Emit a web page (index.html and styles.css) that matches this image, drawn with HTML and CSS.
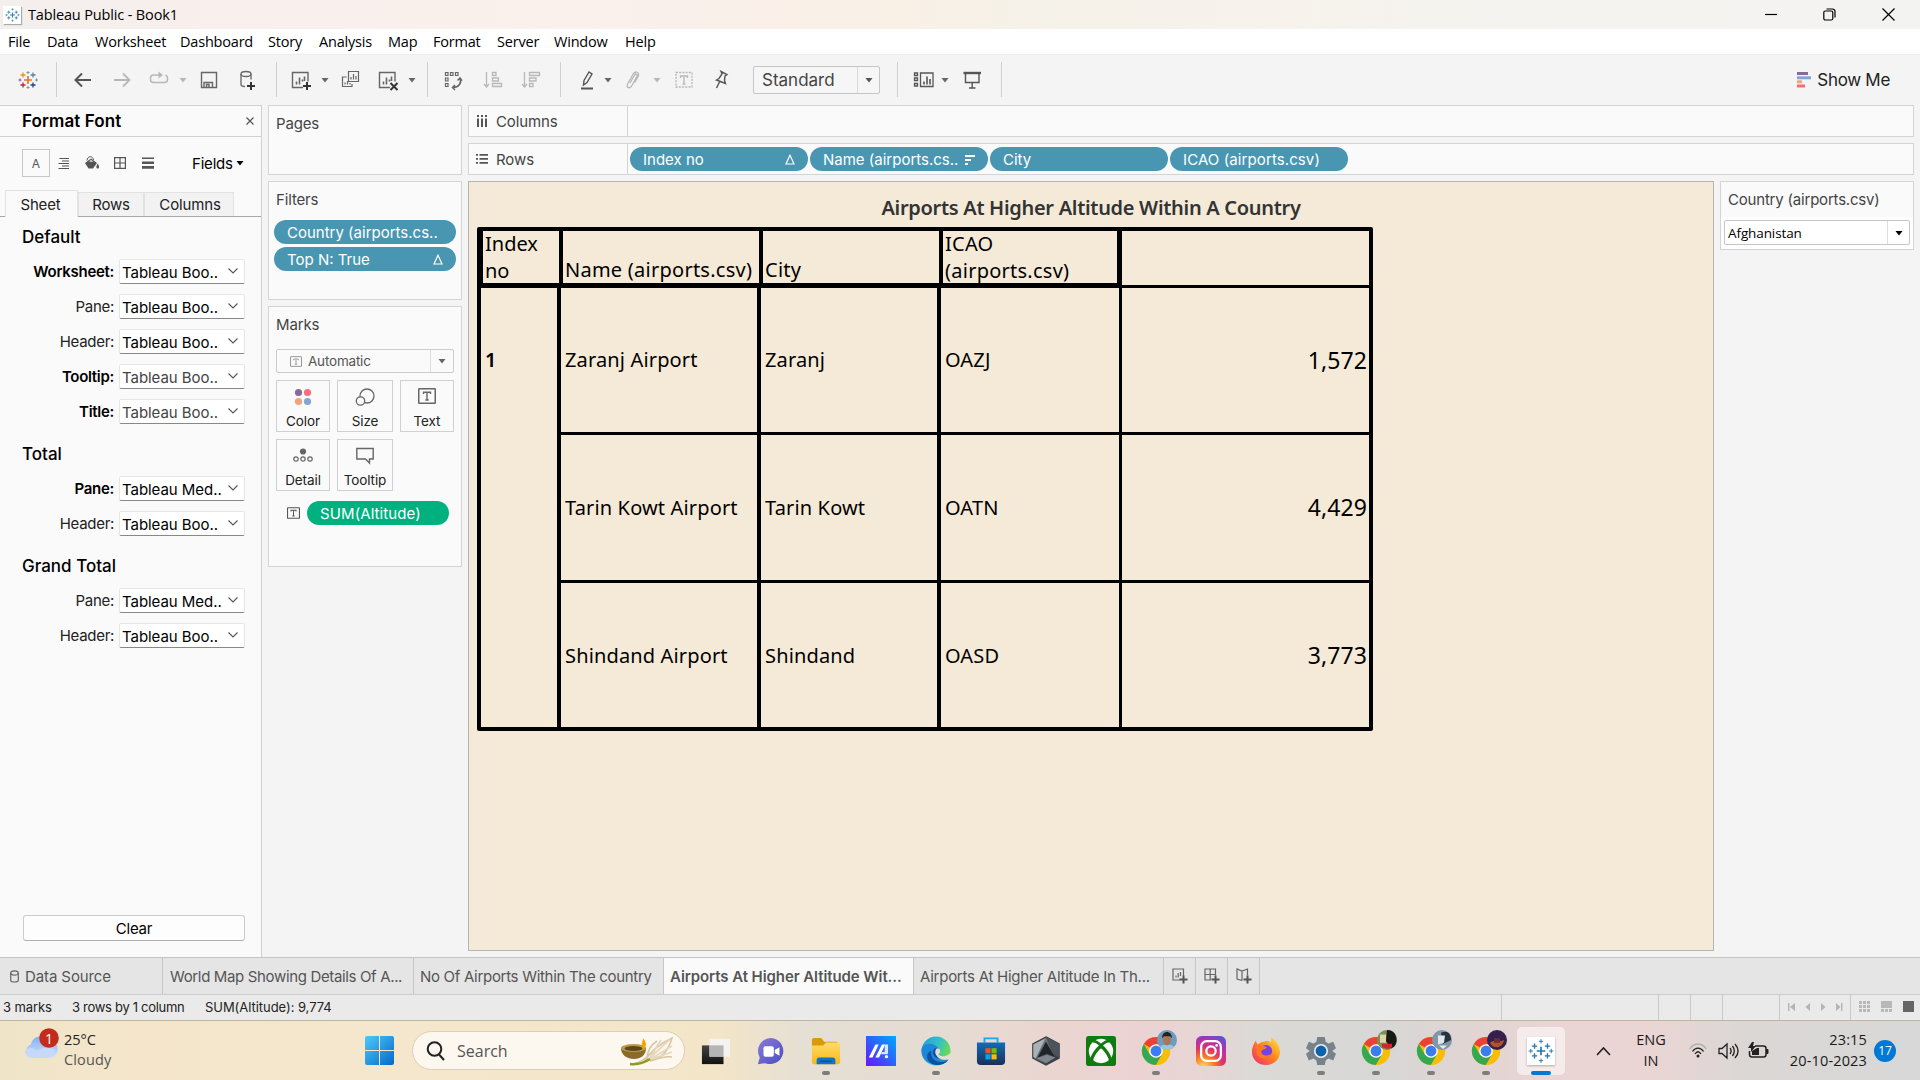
FILE: index.html
```html
<!DOCTYPE html>
<html lang="en">
<head>
<meta charset="utf-8">
<title>Tableau Public - Book1</title>
<link rel="stylesheet" href="styles.css">
</head>
<body>
<svg class="defs" aria-hidden="true">
  <defs>
    <linearGradient id="gWin" x1="0" y1="0" x2="1" y2="1"><stop offset="0" stop-color="#4cc9fb"/><stop offset="1" stop-color="#0669c9"/></linearGradient>
    <linearGradient id="gCloud" x1="0" y1="0" x2="0" y2="1"><stop offset="0" stop-color="#7fb0f2"/><stop offset="1" stop-color="#d4e3fb"/></linearGradient>
    <linearGradient id="gChat" x1="0" y1="0" x2="1" y2="1"><stop offset="0" stop-color="#8b7bd8"/><stop offset="1" stop-color="#4a4fc0"/></linearGradient>
    <linearGradient id="gFolder" x1="0" y1="0" x2="0" y2="1"><stop offset="0" stop-color="#ffdb6b"/><stop offset="1" stop-color="#f9b818"/></linearGradient>
    <linearGradient id="gMa" x1="1" y1="0" x2="0" y2="1"><stop offset="0" stop-color="#00aaff"/><stop offset=".5" stop-color="#2b62ff"/><stop offset="1" stop-color="#6d14ff"/></linearGradient>
    <linearGradient id="gEdge" x1="0" y1="0" x2="1" y2=".4"><stop offset="0" stop-color="#1c9de0"/><stop offset=".6" stop-color="#35c1c4"/><stop offset="1" stop-color="#6ddb50"/></linearGradient>
    <linearGradient id="gStore" x1="0" y1="0" x2="0" y2="1"><stop offset="0" stop-color="#0f6db8"/><stop offset="1" stop-color="#1c2f57"/></linearGradient>
    <linearGradient id="gHex" x1="0" y1="0" x2="1" y2="1"><stop offset="0" stop-color="#8e979e"/><stop offset="1" stop-color="#23282c"/></linearGradient>
    <radialGradient id="gInsta" cx=".25" cy="1.05" r="1.2"><stop offset="0" stop-color="#ffe070"/><stop offset=".3" stop-color="#fa7e1e"/><stop offset=".55" stop-color="#e1306c"/><stop offset=".8" stop-color="#a832b8"/><stop offset="1" stop-color="#4f5bd5"/></radialGradient>
    <linearGradient id="gFox" x1="1" y1="0" x2="0" y2="1"><stop offset="0" stop-color="#fff14a"/><stop offset=".45" stop-color="#ff8a1c"/><stop offset="1" stop-color="#f0227a"/></linearGradient>
    <linearGradient id="gTask" x1="0" y1="0" x2="0" y2="1"><stop offset="0" stop-color="#444"/><stop offset="1" stop-color="#111"/></linearGradient>
    <symbol id="plus9" viewBox="0 0 24 24">
      <g fill="none" stroke="currentColor">
        <path d="M12 8v8M8 12h8" stroke-width="1.6"/>
        <path d="M6 5v5M3.500 7.500h5M18 5v5M15.500 7.500h5M6 14v5M3.500 16.500h5M18 14v5M15.500 16.500h5" stroke-width="1.3"/>
        <path d="M12 1v4M10 3h4M12 19v4M10 21h4M2.500 10v4M.5 12h4M21.500 10v4M19.500 12h4" stroke-width=".9"/>
      </g>
    </symbol>
    <symbol id="chrome" viewBox="0 0 32 32">
      <circle cx="16" cy="16" r="15" fill="#fbbc04"/>
      <path d="M16 16 3 8.500A15 15 0 0 1 29 8.500H16z" fill="#ea4335"/>
      <path d="M3 8.500A15 15 0 0 0 16 31l6.500-11.200L16 16 9.500 19.700z" fill="#34a853"/>
      <path d="M16 8.500h13A15 15 0 0 1 16 31l6.500-11.200z" fill="#fbbc04"/>
      <circle cx="16" cy="16" r="7.300" fill="#fff"/><circle cx="16" cy="16" r="5.800" fill="#3b7ded"/>
    </symbol>
    <symbol id="tbox" viewBox="0 0 18 16">
      <rect x=".75" y=".75" width="16.500" height="14.500" rx=".5" fill="none" stroke="currentColor" stroke-width="1.500"/>
      <path d="M5.500 6V4.300h7V6M9 4.500v7.500M7.300 12h3.400" fill="none" stroke="currentColor" stroke-width="1.400"/>
    </symbol>
    <symbol id="chev" viewBox="0 0 10 6"><path d="M.5.5 5 5 9.500.5" fill="none" stroke="#555" stroke-width="1.100"/></symbol>
    <symbol id="tri" viewBox="0 0 8 6"><path d="M.5 1h7L4 5.500z" fill="currentColor"/></symbol>
    <symbol id="delta" viewBox="0 0 10 11"><path d="M5 1.200 9 10H1z" fill="none" stroke="#fff" stroke-width="1.200"/></symbol>
  </defs>
</svg>

<header class="titlebar">
  <span class="app-icon"><svg width="15" height="16"><use href="#plus9"/></svg></span>
  <span class="app-title">Tableau Public - Book1</span>
  <div class="winbtns">
    <svg width="12" height="12"><path d="M0 5.500h12" stroke="#000" stroke-width="1.200"/></svg>
    <svg width="13" height="13" fill="none" stroke="#000" stroke-width="1.200"><rect x=".8" y="3" width="9" height="9" rx="1.500"/><path d="M3.500 1h6A2.500 2.500 0 0 1 12 3.500v6"/></svg>
    <svg width="13" height="13" stroke="#000" stroke-width="1.200"><path d="M.5.5l12 12M12.500.5l-12 12"/></svg>
  </div>
</header>

<nav class="menubar">
  <span class="w39">File</span><span class="w48">Data</span><span class="w85">Worksheet</span><span class="w88">Dashboard</span><span class="w51">Story</span><span class="w69">Analysis</span><span class="w45">Map</span><span class="w64">Format</span><span class="w56">Server</span><span class="w71">Window</span><span>Help</span>
</nav>

<div class="toolbar">
  <svg class="ic m16" viewBox="0 0 24 24" fill="none">
    <path d="M12 8v8M8 12h8" stroke="#e8762b" stroke-width="1.700"/>
    <path d="M7 4.500v5M4.500 7h5" stroke="#eb912c" stroke-width="1.300"/><path d="M17 4.500v5M14.500 7h5" stroke="#59879b" stroke-width="1.300"/>
    <path d="M7 14.500v5M4.500 17h5" stroke="#c72035" stroke-width="1.300"/><path d="M17 14.500v5M14.500 17h5" stroke="#1f457e" stroke-width="1.300"/>
    <path d="M12 3v3M10.500 4.500h3M12 18v3M10.500 19.500h3M20.500 10.500v3M19 12h3" stroke="#7199a6"/><path d="M4 10.500v3M2.500 12h3" stroke="#5c6692"/>
  </svg>
  <i class="sep m16"></i>
  <svg class="ic m14" viewBox="0 0 24 24" fill="none" stroke="#555" stroke-width="2"><path d="M4.500 12H20M11 5.500 4.500 12l6.500 6.500"/></svg>
  <svg class="ic m15 dim" viewBox="0 0 24 24" fill="none" stroke="currentColor" stroke-width="1.800"><path d="M4 12h15.500M13 5.500l6.500 6.500-6.500 6.500"/></svg>
  <svg class="ic m13 dim" viewBox="0 0 24 24" fill="none" stroke="currentColor" stroke-width="1.500"><path d="M15 7H6.500a3 3 0 0 0-3 3v1.500a3 3 0 0 0 3 3h11a3 3 0 0 0 3-3V10c0-1.500-1-2.500-2-3"/><path d="M11.500 3.500 16 7l-4.500 3.500z" fill="currentColor" stroke="none"/></svg>
  <svg class="car m8 dim"><use href="#tri"/></svg>
  <svg class="ic m10" viewBox="0 0 24 24" fill="none" stroke="#666" stroke-width="1.400"><path d="M4.500 4.500h15v15h-15z"/><path d="M7 19.500v-5h8.500v5M9.500 19.500v-3h2.500v3"/></svg>
  <svg class="ic m14" viewBox="0 0 24 24" fill="none" stroke="#666" stroke-width="1.300"><ellipse cx="11" cy="6" rx="5" ry="2.500"/><path d="M6 6v10.500c0 1.200 2 2 4 2M16 6v5.500"/><path d="M16 14v8M12 18h8" stroke="#333" stroke-width="2"/></svg>
  <i class="sep m17"></i>
  <svg class="ic m12" viewBox="0 0 24 24" fill="none" stroke="#666" stroke-width="1.400"><path d="M14 19.500H3.500V4.500h15.500v9"/><path d="M7.500 16.500v-3M10.500 16.500V9.500M13.500 13.500v-2M15.500 13V8.500" stroke-width="1.600"/><path d="M18 14v8M14 18h8" stroke="#333" stroke-width="2"/></svg>
  <svg class="car m8"><use href="#tri"/></svg>
  <svg class="ic m10" viewBox="0 0 24 24" fill="none" stroke="#666" stroke-width="1.200"><path d="M9.500 3.500h10v10h-10zM7.500 9H3.500v9.500h9.500V16"/><path d="M12 11.500v-2.500M14.500 11.500V6M17 11.500V8M6 16.500v-2M8.500 16.500v-3.500M11 16.500v-1.500"/></svg>
  <svg class="ic m13" viewBox="0 0 24 24" fill="none" stroke="#666" stroke-width="1.400"><path d="M14 19.500H3.500V4.500h15.500v9"/><path d="M7.500 16.500v-3M10.500 16.500V9.500M13.500 13.500v-2M15.500 13V8.500" stroke-width="1.600"/><path d="m14.500 15 7 7M21.500 15l-7 7" stroke="#333" stroke-width="2"/></svg>
  <svg class="car m8"><use href="#tri"/></svg>
  <i class="sep m11"></i>
  <svg class="ic m13" viewBox="0 0 24 24" fill="none" stroke="#666" stroke-width="1.200"><path d="M4.500 4.500H7v3H4.500zM9.500 4.500H12v3H9.500zM14.500 4.500H17v3h-2.500zM4.500 10H7v3H4.500zM4.500 15.500H7v3H4.500z"/><path d="M19 10.500c2 4-1 9-7 9M16.500 12.500l2.500-2.500 2 2.800M14 17l-2.500 2.500L14 22" stroke-width="1.500"/></svg>
  <svg class="ic m16 dim" viewBox="0 0 24 24" fill="none" stroke="currentColor" stroke-width="1.300"><path d="M5.500 4v14.500M3 16l2.500 3L8 16M11.500 4.500h3.500v3h-3.500zM11.500 10h6v3h-6zM11.500 15.500h9v3h-9z"/></svg>
  <svg class="ic m14 dim" viewBox="0 0 24 24" fill="none" stroke="currentColor" stroke-width="1.300"><path d="M5.500 4v14.500M3 16l2.500 3L8 16M10.500 4.500h10v3h-10zM10.500 10h6.500v3h-6.500zM10.500 15.500H14v3h-3.500z"/></svg>
  <i class="sep m17"></i>
  <svg class="ic m14" viewBox="0 0 24 24" fill="none" stroke="#555" stroke-width="1.400"><path d="m9 12.500 5-8.500 3 2-5 8.500-3.500 2.500z"/><path d="M6 20.500h12" stroke-width="2"/></svg>
  <svg class="car m5"><use href="#tri"/></svg>
  <svg class="ic m8 dim" viewBox="0 0 24 24" fill="none" stroke="currentColor" stroke-width="1.300"><path d="m10 15 4.500-8c1.500-2 3.500-.5 2.500 1.200l-5.500 10c-2 3-5.500 1-4-2l5.500-10c2-4 7-2 5 2.500l-3.500 6"/></svg>
  <svg class="car m9 dim"><use href="#tri"/></svg>
  <svg class="ic m11 dim" viewBox="0 0 24 24" fill="none" stroke="currentColor" stroke-width="1.300"><path d="M4 4.500h16v14.500H4z" stroke-dasharray="2 1.200"/><path d="M8.500 10V8h7v2M12 8v8M10.500 16h3"/></svg>
  <svg class="ic m12" viewBox="0 0 24 24" fill="none" stroke="#555" stroke-width="1.400"><path d="m13 3.500 6 3-2 1.500-.5 4.500 1 3-9-3.500 2.500-1.500L14 6zM11.500 14l-3 6"/></svg>
  <div class="view-select m21"><span>Standard</span><b><svg width="8" height="6"><use href="#tri"/></svg></b></div>
  <i class="sep m17"></i>
  <svg class="ic m14" viewBox="0 0 24 24" fill="none" stroke="#555" stroke-width="1.300"><path d="M2.500 5h3v2.500h-3zM2.500 10h3v2.500h-3zM2.500 15.500h3V18h-3zM8.500 5H21v13.500H8.500z"/><path d="M12 16.500v-3M15 16.500V8.500M18 16.500v-5.500" stroke-width="1.600"/></svg>
  <svg class="car m5"><use href="#tri"/></svg>
  <svg class="ic m11" viewBox="0 0 24 24" fill="none" stroke="#555" stroke-width="1.400"><path d="M5.500 5.500v9h13.500v-9M12.200 14.500v5M9 20h6.500"/><path d="M3.500 5h17.500" stroke-width="2.400"/></svg>
  <i class="sep m17"></i>
  <div class="showme">
    <svg width="14" height="16"><path d="M0 0h11v3H0z" fill="#866b9a"/><path d="M0 4.300h14v3H0z" fill="#83a5cf"/><path d="M0 8.300h5v3H0z" fill="#f2a37a"/><path d="M0 12.500h8v3H0z" fill="#f56b7e"/></svg>
    <span>Show Me</span>
  </div>
</div>

<main class="work">
  <aside class="format">
    <div class="fhead"><h2>Format Font</h2><svg width="8" height="8" stroke="#555" stroke-width="1.200"><path d="M.5.5l7 7M7.500.5l-7 7"/></svg></div>
    <div class="ftools">
      <span class="abox">A</span>
      <svg width="12" height="12" viewBox="0 0 12 12" stroke="#555" stroke-width="1.100"><path d="M1.500 1.500h9.500M4 4h7M.5 6.500H11M4 9h7M.5 11.500H11"/></svg>
      <svg width="16" height="14" viewBox="0 0 16 14"><path d="M3 4.500C3.500-.5 9-.5 9.500 4" fill="none" stroke="#555"/><path d="M1 7 7 2.500 13 7l-4 5.500H4.500z" fill="#555"/><path d="M5 5.500 7 4l2.500 1.800z" fill="#fafafa"/><path d="M13.700 7.500c1.500 2.500 2 5 0 5s-1.500-2.500 0-5z" fill="#555"/></svg>
      <svg width="12" height="12" viewBox="0 0 12 12" fill="none" stroke="#555" stroke-width="1.200"><path d="M.6.6h10.800v10.800H.6zM6 .6v10.800M.6 6h10.800"/></svg>
      <svg class="last" width="12" height="12" viewBox="0 0 12 12" fill="#555"><path d="M0 .5h12v1.500H0zM0 4.500h12V7H0zM0 9h12v2.800H0z"/></svg>
      <span class="fields">Fields</span><svg width="8" height="6"><use href="#tri"/></svg>
    </div>
    <div class="ftabs"><span class="on">Sheet</span><span class="r">Rows</span><span class="c">Columns</span></div>
    <h3>Default</h3>
    <div class="frow"><label class="b">Worksheet:</label><div class="sel">Tableau Boo..<svg><use href="#chev"/></svg></div></div>
    <div class="frow"><label>Pane:</label><div class="sel">Tableau Boo..<svg><use href="#chev"/></svg></div></div>
    <div class="frow"><label>Header:</label><div class="sel">Tableau Boo..<svg><use href="#chev"/></svg></div></div>
    <div class="frow"><label class="b">Tooltip:</label><div class="sel g">Tableau Boo..<svg><use href="#chev"/></svg></div></div>
    <div class="frow"><label class="b">Title:</label><div class="sel g">Tableau Boo..<svg><use href="#chev"/></svg></div></div>
    <h3 class="next">Total</h3>
    <div class="frow"><label class="b">Pane:</label><div class="sel">Tableau Med..<svg><use href="#chev"/></svg></div></div>
    <div class="frow"><label>Header:</label><div class="sel">Tableau Boo..<svg><use href="#chev"/></svg></div></div>
    <h3 class="next">Grand Total</h3>
    <div class="frow"><label>Pane:</label><div class="sel">Tableau Med..<svg><use href="#chev"/></svg></div></div>
    <div class="frow"><label>Header:</label><div class="sel">Tableau Boo..<svg><use href="#chev"/></svg></div></div>
    <div class="clear">Clear</div>
  </aside>

  <section class="cards">
    <div class="card pages"><h4>Pages</h4></div>
    <div class="card filters"><h4>Filters</h4>
      <div class="pill">Country (airports.cs..</div>
      <div class="pill">Top N: True<svg width="10" height="11"><use href="#delta"/></svg></div>
    </div>
    <div class="card marks"><h4>Marks</h4>
      <div class="auto"><svg width="12" height="11"><use href="#tbox"/></svg><span>Automatic</span><b><svg width="8" height="6"><use href="#tri"/></svg></b></div>
      <div class="mgrid">
        <div><svg width="18" height="18"><circle cx="4.500" cy="4.500" r="3.600" fill="#866b9a"/><circle cx="13.500" cy="4.500" r="3.600" fill="#fa6e80"/><circle cx="4.500" cy="13.500" r="3.600" fill="#f2a37a"/><circle cx="13.500" cy="13.500" r="3.600" fill="#83a5cf"/></svg>Color</div>
        <div><svg width="20" height="18" fill="#fafafa" stroke="#666" stroke-width="1.300"><circle cx="12" cy="8" r="7"/><circle cx="5.500" cy="13" r="4.200"/></svg>Size</div>
        <div><svg class="t" width="18" height="16"><use href="#tbox"/></svg>Text</div>
        <div><svg width="20" height="18" fill="none" stroke="#666" stroke-width="1.200"><circle cx="10" cy="4.500" r="2.500" fill="#666"/><circle cx="3" cy="12" r="2.200"/><circle cx="10" cy="12" r="2.200"/><circle cx="17" cy="12" r="2.200"/></svg>Detail</div>
        <div><svg width="18" height="18" fill="none" stroke="#666" stroke-width="1.400"><path d="M.8 1.500h16.400v10.500h-3.700V16l-4-4H.8z"/></svg>Tooltip</div>
      </div>
      <div class="sum"><svg width="13" height="12"><use href="#tbox"/></svg><div class="pill green">SUM(Altitude)</div></div>
    </div>
  </section>

  <section class="sheet">
    <div class="shelf"><div class="slabel"><svg width="12" height="12" viewBox="0 0 12 12" fill="#555"><path d="M1 0h2v2H1zM5 0h2v2H5zM9 0h2v2H9zM1 3.500h2V12H1zM5 3.500h2V12H5zM9 3.500h2V12H9z"/></svg>Columns</div></div>
    <div class="shelf"><div class="slabel"><svg width="12" height="12" viewBox="0 0 12 12" fill="#555"><path d="M0 1h2v1.800H0zM0 5h2v1.800H0zM0 9h2v1.800H0zM3.500 1H12v1.800H3.500zM3.500 5H12v1.800H3.500zM3.500 9H12v1.800H3.500z"/></svg>Rows</div>
      <div class="pills"><div class="pill">Index no<svg width="10" height="11"><use href="#delta"/></svg></div><div class="pill sorted">Name (airports.cs..<svg width="10" height="10"><path d="M0 1h10M0 5h6M0 9h3" stroke="#fff" stroke-width="2"/></svg></div><div class="pill">City</div><div class="pill icao">ICAO (airports.csv)</div></div>
    </div>
    <div class="below">
      <div class="canvas">
        <h1>Airports At Higher Altitude Within A Country</h1>
        <div class="table">
          <div class="thead">
            <div class="two">Index<br>no</div><div>Name (airports.csv)</div><div>City</div><div class="two">ICAO<br>(airports.csv)</div><div class="blank"></div>
          </div>
          <div class="tbody">
            <div class="idx">1</div>
            <div class="rows">
              <div class="tr"><span>Zaranj Airport</span><span>Zaranj</span><span>OAZJ</span><span class="num">1,572</span></div>
              <div class="tr"><span>Tarin Kowt Airport</span><span>Tarin Kowt</span><span>OATN</span><span class="num">4,429</span></div>
              <div class="tr"><span>Shindand Airport</span><span>Shindand</span><span>OASD</span><span class="num">3,773</span></div>
            </div>
          </div>
        </div>
      </div>
      <div class="country"><h4>Country (airports.csv)</h4><div class="cwrap"><div class="csel"><span>Afghanistan</span><b><svg width="8" height="6"><use href="#tri"/></svg></b></div></div></div>
    </div>
  </section>
</main>

<div class="tabs">
  <div class="tab ds"><svg width="9" height="13" fill="none" stroke="#666" stroke-width="1.200"><ellipse cx="4.500" cy="3" rx="3.800" ry="2.200"/><path d="M.7 3v7.500c0 2 7.600 2 7.600 0V3"/></svg>Data Source</div>
  <div class="tab t1"><span>World Map Showing Details Of A...</span></div>
  <div class="tab t2"><span>No Of Airports Within The country</span></div>
  <div class="tab t3 on"><span>Airports At Higher Altitude Wit...</span></div>
  <div class="tab t4"><span>Airports At Higher Altitude In Th...</span></div>
  <div class="tab add"><svg width="16" height="16" fill="none" stroke="#666" stroke-width="1.200"><path d="M8 12H1V1h10.500v7M4 9.500v-2M6.200 9.500V5M8.500 8V4"/><path d="M11.500 7.500v8M7.500 11.500h8" stroke="#555" stroke-width="2"/></svg></div>
  <div class="tab add"><svg width="16" height="16" fill="none" stroke="#666" stroke-width="1.200"><path d="M7 12H1V1h10.500v6.500M6.200 1v11M1 6.500h10.500"/><path d="M11.500 7.500v8M7.500 11.500h8" stroke="#555" stroke-width="2"/></svg></div>
  <div class="tab add"><svg width="16" height="16" fill="none" stroke="#666" stroke-width="1.200"><path d="M6 12.500 1 11V1l5 2 5.500-2v6.500M6 3v9.500"/><path d="M11.500 7.500v8M7.500 11.500h8" stroke="#555" stroke-width="2"/></svg></div>
</div>

<div class="status">
  <span class="s1">3 marks</span><span class="s2">3 rows by 1 column</span><span class="s3">SUM(Altitude): 9,774</span>
  <div class="cells"><i class="c157"></i><i class="c32"></i><i class="c32"></i><i class="c57"></i>
    <i class="c71"><svg width="62" height="8" viewBox="0 0 62 8" fill="#b4b4b4"><path d="M0 0h1.400v8H0zM7 0v8L2 4zM22 0v8l-4.500-4zM33 0v8l4.500-4zM48 0v8l4.500-4zM53 0h1.400v8H53z"/></svg></i>
    <i class="c69"><svg width="56" height="11" viewBox="0 0 56 11"><path d="M0 0h3v3H0zM4 0h3v3H4zM8 0h3v3H8zM0 4h3v3H0zM4 4h3v3H4zM8 4h3v3H8zM0 8h3v3H0zM4 8h3v3H4zM8 8h3v3H8zM22 0h11v7H22zM22 8h3v3h-3zM26 8h3v3h-3zM30 8h3v3h-3z" fill="#b8b8b8"/><path d="M44 0h11v11H44z" fill="#666"/></svg></i>
  </div>
</div>

<footer class="taskbar">
  <div class="weather">
    <svg width="38" height="34" viewBox="0 0 38 34"><path d="M8 30a7 7 0 0 1-1-13.500 10 10 0 0 1 18-4A8.500 8.500 0 0 1 25 30z" fill="url(#gCloud)"/><path d="M1 23c4-5 9-3 12 0 4-4 12-4 18-1 0 5-3 8-7 8H8c-4 0-7-3-7-7z" fill="#c6d9f8"/><circle cx="25" cy="10" r="9.800" fill="#c42b1c"/></svg><em>1</em>
    <p>25°C<br><span>Cloudy</span></p>
  </div>
  <div class="start"><svg width="29" height="29"><path d="M0 2q0-2 2-2h12v14H0zM15 0h12q2 0 2 2v12H15zM0 15h14v14H2q-2 0-2-2zM15 15h14v12q0 2-2 2H15z" fill="url(#gWin)"/></svg></div>
  <div class="search">
    <svg width="19" height="20" fill="none" stroke="#222" stroke-width="2"><circle cx="8.500" cy="8" r="6.800"/><path d="m13 13.500 5 5.500"/></svg><span>Search</span>
    <svg class="bowl" width="54" height="30" viewBox="0 0 54 30"><path d="M14 27c10-1 14-10 20-12M23 26C30 14 40 7 51 2c-3 10-8 20-22 23M26 24C26 14 31 8 36 5M30 25c8-3 15-5 21-4" fill="none" stroke="#d9c6a4" stroke-width="1.600"/><path d="M28 23 49 3M28 24 51 10M28 24 51 16M28 23 40 4" stroke="#e6d8bc" stroke-width="1.800"/><path d="M9 28c8 1 14-1 20-5" fill="none" stroke="#8f9a20" stroke-width="2.500"/><path d="M0 12h25c0 7-5 11-12 11S0 19 0 12z" fill="#8a6b28"/><ellipse cx="12.500" cy="12" rx="12.500" ry="4" fill="#bb9a4f"/><ellipse cx="12.500" cy="12.500" rx="9" ry="2.500" fill="#5e4818"/><path d="M22 13c-3-4 0-7 0-11 3 4 5 8 0 11z" fill="#f5a300"/></svg>
  </div>
  <div class="apps">
    <div><svg viewBox="0 0 32 32"><path d="M1 10h23v20H1z" fill="url(#gTask)"/><path d="M9 3h22v19H9z" fill="#f3f3f3" opacity=".95"/><path d="M9 10h15v12H9z" fill="#b5b5b5"/></svg></div>
    <div><svg viewBox="0 0 32 32"><path d="M16 2a14 14 0 1 1-6 27l-8 1 2-7A14 14 0 0 1 16 2z" fill="url(#gChat)"/><rect x="8" y="11" width="11" height="11" rx="2" fill="#fff"/><path d="m20 15 5-3v9l-5-3z" fill="#fff"/></svg></div>
    <div class="run"><svg viewBox="0 0 32 32"><path d="M1 4q0-2 2-2h8l3 4h14v6H1z" fill="#d99a0a"/><path d="M1 10h12l3-3h13q2 0 2 2v19q0 2-2 2H3q-2 0-2-2z" fill="url(#gFolder)"/><path d="M6 30v-4q0-3 3-3h14q3 0 3 3v4z" fill="#1173c6"/><path d="M10 27h12" stroke="#0b4e90" stroke-width="1.500"/></svg></div>
    <div><svg viewBox="0 0 32 32"><path d="M0 0h32v32H0z" fill="url(#gMa)"/><path d="m3 23 7-14h3.500L7 23zM10 23l7-14h3.500L14 23z" fill="#fff"/><path d="M20 9h3.500v10H20zM17 17h6v2.500h-7z" fill="#dfe4ff"/><circle cx="21.800" cy="22" r="1.800" fill="#fff"/></svg></div>
    <div class="run"><svg viewBox="0 0 32 32"><circle cx="16" cy="16" r="15.500" fill="url(#gEdge)"/><path d="M.5 15c1-8 13-9 18-2 2 3 0 4-2 5-1 7 6 9 13 7C25 33 2 34 .5 16z" fill="#1f87d8"/><path d="M11 16c-2 9 7 15 17.500 10-6 8-21 6-22-4 0-4 3-6 4.500-6z" fill="#0c51a2"/><path d="M18 12.500c-4 0-6 3-5 7 1 3 4 4.500 7 4.500-3-1.500-4-4-3-6z" fill="#0c51a2"/><path d="M17 13c3.500 0 5 4 1.500 6.500 2 3 8 3 13-1.500l-1 6c-3 2-8 1.500-11-.5-4-2.500-6-7-2.500-10.500z" fill="#e5dcd4"/><path d="M20 19.500c4 2.500 9 1 11-2l.5-3.500c0 6-7 9-11.500 5.500z" fill="#62d85a"/></svg></div>
    <div><svg viewBox="0 0 32 32"><path d="M9 7V2.500h14V7" fill="none" stroke="#1aa6ee" stroke-width="2"/><path d="M1 7h30v20q0 4-4 4H5q-4 0-4-4z" fill="url(#gStore)"/><path d="M10 13h5.500v5.500H10z" fill="#f25022"/><path d="M16.500 13H22v5.500h-5.500z" fill="#7fba00"/><path d="M10 19.500h5.500V25H10z" fill="#00a4ef"/><path d="M16.500 19.500H22V25h-5.500z" fill="#ffb900"/></svg></div>
    <div><svg viewBox="0 0 32 32"><path d="m16 1 14 7.500v15L16 31 2 23.500v-15z" fill="url(#gHex)"/><path d="m16 1 14 7.500v15L16 31 2 23.500v-15z" fill="none" stroke="#3b4247" stroke-width="1.500"/><path d="m16 1 14 7.500v15L23 18z" fill="#4b545b"/><path d="M15 3 5 24 2.500 22V9z" fill="#aab2b7"/><path d="m16 6 9 16-8-3-10 4z" fill="#202427"/><path d="m6 24 11-4 9 3-10 6z" fill="#7d868c"/></svg></div>
    <div><svg viewBox="0 0 32 32"><rect width="32" height="32" rx="3" fill="#107c10"/><circle cx="16" cy="16" r="13" fill="#fff"/><path d="M7 5.500C11 5 14 8 16 10c2-2 5-5 9-4.500" fill="none" stroke="#107c10" stroke-width="3"/><path d="M5.500 27C7 20 12 14 16 10.500 20 14 25 20 26.500 27" fill="none" stroke="#107c10" stroke-width="3.500"/><path d="M12 6.500 16 9l4-2.500L16 14z" fill="#107c10"/></svg></div>
    <div class="run"><svg viewBox="0 0 32 32"><use href="#chrome"/></svg><u><svg viewBox="0 0 20 22" preserveAspectRatio="none"><ellipse cx="10" cy="11" rx="10" ry="11" fill="#6d9cc0"/><path d="M3 19c1-4 13-4 14 0-4 4-10 4-14 0z" fill="#9fc4d8"/><ellipse cx="10" cy="11" rx="4" ry="6" fill="#a87758"/><path d="M5 9c0-9 10-9 10 0L13 7H7z" fill="#222"/></svg></u></div>
    <div><svg viewBox="0 0 32 32"><rect width="32" height="32" rx="6" fill="url(#gInsta)"/><rect x="5.500" y="5.500" width="21" height="21" rx="6" fill="none" stroke="#fff" stroke-width="2.400"/><circle cx="16" cy="16" r="5" fill="none" stroke="#fff" stroke-width="2.400"/><circle cx="22" cy="10" r="1.400" fill="#fff"/></svg></div>
    <div><svg viewBox="0 0 32 32"><path d="M17 5c2 0 3 1 4 2 1-2 1-4 0-6 6 4 10 9 10 16 0 8-7 14-15 14S1 25 1 17C1 12 3 8 5 5l2 4c2-2 6-3 10-4z" fill="url(#gFox)"/><circle cx="16" cy="16" r="6.500" fill="#7542e5"/><path d="M6 12c4-3 8-1 11 0-2 3-6 2-6 5s5 6 10 2c-2 7-14 6-15-1z" fill="#ff7a1f"/></svg></div>
    <div class="run"><svg viewBox="0 0 32 32"><path d="M12 1h8l1 5 3 2 5-2 3 7-4 3 4 3-3 7-5-2-3 2-1 5h-8l-1-5-3-2-5 2-3-7 4-3-4-3 3-7 5 2 3-2z" fill="#78828b"/><circle cx="16" cy="16" r="7.500" fill="#eef1f3"/><circle cx="16" cy="16" r="5.800" fill="#0d62ae"/></svg></div>
    <div class="run"><svg viewBox="0 0 32 32"><use href="#chrome"/></svg><u><svg viewBox="0 0 20 22" preserveAspectRatio="none"><ellipse cx="10" cy="11" rx="10" ry="11" fill="#7e8e55"/><path d="M10 0c12 0 12 18 4 20L9 12z" fill="#181a14"/><path d="M3 5h6v9H3z" fill="#d9d8a8"/><path d="M5 15h10v4l-4 2-6-2z" fill="#d8232f"/></svg></u></div>
    <div class="run"><svg viewBox="0 0 32 32"><use href="#chrome"/></svg><u><svg viewBox="0 0 20 22" preserveAspectRatio="none"><ellipse cx="10" cy="11" rx="10" ry="11" fill="#7f97a8"/><path d="M9 3c8-4 10 3 10 8l-8 4z" fill="#26323c"/><path d="M6 6h7l-1 8-6 2z" fill="#dfe8ec"/><path d="M7 17h8l-4 4z" fill="#e8eef0"/></svg></u></div>
    <div class="run"><svg viewBox="0 0 32 32"><use href="#chrome"/></svg><u><svg viewBox="0 0 20 22" preserveAspectRatio="none"><ellipse cx="10" cy="11" rx="10" ry="11" fill="#33204f"/><path d="M3 14c4-4 9 0 14-3-1 9-11 11-14 3z" fill="#b4512a"/><path d="M7 9h6v5H7z" fill="#6b2d39"/></svg></u></div>
    <div class="active"><span><svg width="28" height="28" viewBox="-1 -1 26 26"><use href="#plus9" width="24" height="24"/></svg></span></div>
  </div>
  <div class="tray">
    <svg class="up" width="15" height="10" fill="none" stroke="#222" stroke-width="1.600"><path d="m1 9 6.500-7L14 9"/></svg>
    <p class="lang">ENG<br>IN</p>
    <svg class="wifi" width="18" height="15" viewBox="0 0 18 15" fill="none" stroke="#222" stroke-width="1.300"><path d="M.7 6c4-6.500 12.600-6.500 16.600 0" stroke="#aaa"/><path d="M3.500 8.500c3-4.500 8-4.500 11 0M6 11c2-3 4-3 6 0"/><circle cx="9" cy="13" r="1.500" fill="#222" stroke="none"/></svg>
    <svg class="snd" width="21" height="18" viewBox="0 0 21 18" fill="none" stroke="#222" stroke-width="1.300"><path d="M1 6.500h3L9 2v14l-5-4.500H1zM12 6c1.500 2 1.500 4 0 6M14.500 4c2.500 3.500 2.500 6.500 0 10M17 2c4 4.500 4 9.500 0 14"/></svg>
    <svg class="bat" width="21" height="18" viewBox="0 0 21 18"><path d="M7 4h8.500q2.500 0 2.500 2.500v6q0 2.500-2.500 2.500H4q-2.500 0-2.500-2.500V9" fill="none" stroke="#222" stroke-width="1.500"/><path d="M18.500 7.500h1.500v4h-1.500z" fill="#222" stroke="#222"/><path d="M4 13V9l5-3h2v7zM4 0 0 6h3v4l5-6H5l1-4z" fill="#222"/></svg>
    <p class="clock">23:15<br>20-10-2023</p>
    <span class="n17">17</span>
  </div>
</footer>
</body>
</html>
```
FILE: styles.css
```css
* { box-sizing: border-box; }
body { margin: 0; width: 1920px; height: 1080px; overflow: hidden; background: #f4f4f4; font-family: "Inter", "Roboto", sans-serif; color: #000; display: flex; flex-direction: column; }
h1, h2, h3, h4, p { margin: 0; font-weight: 400; }
svg { display: block; flex: none; }
.defs { position: absolute; width: 0; height: 0; }
span, label, h1, h2, h3, h4, .pill, .sel { white-space: nowrap; }

/* Title bar and menu */
.titlebar { height: 29px; flex: none; display: flex; align-items: center; padding-left: 3px; background: linear-gradient(90deg, #f3efed 0, #f9efec 220px, #faf0ec 620px, #f9f0e6 900px, #f5f2e9 1050px, #f7f2ec 1250px, #f5f3ee 1450px, #f3f3f2 1920px); font-family: "Open Sans", sans-serif; font-size: 14px; }
.app-icon { width: 18px; height: 18px; display: flex; align-items: center; justify-content: center; background: #fff; box-shadow: 1px 1px 1px #aaa; color: #2f7ba8; }
.app-title { margin-left: 7px; font-size: 14.500px; letter-spacing: -.15px; }
.winbtns { margin-left: auto; display: flex; align-items: center; gap: 46px; padding-right: 25px; }
.menubar { height: 25px; flex: none; background: #fff; display: flex; align-items: center; padding-left: 8px; font-family: "Open Sans", sans-serif; font-size: 14.500px; letter-spacing: -.2px; padding-bottom: 0; }
.w39 { width: 39px; } .w48 { width: 48px; } .w85 { width: 85px; } .w88 { width: 88px; } .w51 { width: 51px; } .w69 { width: 69px; } .w45 { width: 45px; } .w64 { width: 64px; } .w56 { width: 57px; } .w71 { width: 71px; }

/* Toolbar */
.toolbar { height: 51px; flex: none; display: flex; align-items: center; background: #f4f4f4; border-top: 1px solid #ededed; padding-bottom: 1px; }
.ic { width: 24px; height: 24px; }
.car { width: 8px; height: 6px; color: #666; }
.dim { color: #b8b8b8; }
.sep { width: 1px; height: 35px; background: #d0d0d0; }
.m5 { margin-left: 5px; } .m8 { margin-left: 8px; } .m9 { margin-left: 9px; } .m10 { margin-left: 10px; } .m11 { margin-left: 11px; } .m12 { margin-left: 12px; } .m13 { margin-left: 13px; } .m14 { margin-left: 14px; } .m15 { margin-left: 15px; } .m16 { margin-left: 16px; } .m17 { margin-left: 17px; } .m21 { margin-left: 21px; }
.view-select { width: 127px; height: 28px; border: 1px solid #c6c6c6; border-radius: 2px; display: flex; align-items: center; background: #f6f6f6; font-size: 17px; color: #444; padding-left: 8px; }
.view-select b { margin-left: auto; width: 22px; height: 26px; border-left: 1px solid #d8d8d8; display: flex; align-items: center; justify-content: center; color: #555; }
.showme { margin-left: auto; padding-right: 30px; display: flex; gap: 6px; align-items: center; font-size: 17px; letter-spacing: -.3px; color: #222; }

/* Work area */
.work { height: 852px; flex: none; display: flex; }
.format { width: 262px; flex: none; background: #fafafa; border: 1px solid #d0d0d0; border-width: 1px 1px 0 0; display: flex; flex-direction: column; }
.fhead { height: 31px; border-bottom: 1px solid #d0d0d0; display: flex; align-items: center; justify-content: space-between; padding: 0 7px 0 22px; }
.fhead h2 { font-size: 17px; font-weight: 600; letter-spacing: .1px; }
.ftools { height: 52px; display: flex; align-items: center; padding-left: 22px; margin-bottom: 1px; }
.ftools svg { margin-left: 14px; }
.ftools .abox { width: 28px; height: 28px; border: 1px solid #c6c6c6; display: flex; align-items: center; justify-content: center; font-size: 12px; color: #555; margin-right: -6px; }
.ftools .last { margin-left: 16px; }
.fields { font-size: 15px; letter-spacing: -.2px; margin-left: 38px; width: 40px; }
.ftools .fields + svg { margin-left: 4px; }
.ftabs { display: flex; align-items: flex-end; height: 27px; padding-left: 5px; border-bottom: 1px solid #a8a8a8; font-size: 15px; letter-spacing: -.15px; color: #222; }
.ftabs span { height: 24px; display: flex; align-items: center; justify-content: center; background: #f2f2f2; border: 1px solid #e2e2e2; border-bottom: 0; }
.ftabs .on { width: 73px; height: 27px; margin-bottom: -1px; padding-right: 2px; background: #fafafa; }
.ftabs .r { width: 66px; } .ftabs .c { width: 90px; padding-left: 2px; }
.format h3 { height: 42px; line-height: 40px; padding-left: 22px; font-size: 17px; font-weight: 500; }
.format h3.next { height: 41px; margin-top: 1px; line-height: 38px; }
.frow { height: 35px; display: flex; gap: 5px; }
.frow label { width: 114px; text-align: right; font-size: 15px; line-height: 26px; color: #222; letter-spacing: -.3px; }
.frow .b { font-weight: 600; color: #000; }
.sel { width: 126px; height: 25px; background: #fff; border: 1px solid #e6e6e6; border-bottom-color: #888; border-radius: 2px; display: flex; align-items: center; justify-content: space-between; font-size: 15px; padding: 2px 6px 0 2px; letter-spacing: -.05px; }
.sel.g { color: #444; }
.sel svg { width: 10px; height: 6px; margin-top: -3px; }
.clear { width: 222px; height: 26px; margin: auto 0 16px 23px; border: 1px solid #ccc; border-bottom-color: #b0b0b0; border-radius: 3px; background: #fdfdfd; text-align: center; font-size: 15px; letter-spacing: -.2px; line-height: 25px; }

.cards { width: 206px; flex: none; padding-left: 6px; display: flex; flex-direction: column; gap: 6px; }
.card { width: 194px; background: #fafafa; border: 1px solid #d4d4d4; }
.card h4, .country h4 { font-size: 15px; color: #444; padding-left: 7px; height: 36px; line-height: 35px; letter-spacing: -.15px; }
.pages { height: 70px; } .filters { height: 119px; } .marks { height: 261px; }
.pill { height: 24px; border-radius: 12px; background: #4996b2; color: #fff; font-size: 15px; line-height: 23px; padding: 1px 13px 0; display: flex; justify-content: space-between; align-items: center; }
.filters .pill { margin: 2px 5px 3px; width: 182px; }
.filters h4 + .pill { margin-top: 2px; }
.auto { height: 24px; width: 178px; margin: 6px 0 7px 7px; border: 1px solid #ccc; border-radius: 2px; display: flex; align-items: center; padding-left: 13px; font-size: 13.500px; letter-spacing: -.2px; color: #555; gap: 6px; }
.auto svg { color: #999; }
.auto b { margin-left: auto; height: 22px; width: 23px; border-left: 1px solid #ddd; display: flex; align-items: center; justify-content: center; }
.auto b svg { color: #666; }
.mgrid { display: grid; grid-template-columns: 54px 56px 54px; gap: 7px; margin-left: 7px; }
.mgrid div { height: 52px; border: 1px solid #d0d0d0; display: flex; flex-direction: column; align-items: center; padding-top: 7px; gap: 7px; font-size: 13.500px; letter-spacing: -.1px; line-height: 16px; color: #222; }
.mgrid .t { margin-bottom: 2px; color: #666; }
.sum { display: flex; align-items: center; margin: 10px 0 0 18px; gap: 7px; color: #555; }
.green { width: 142px; background: #00b180; letter-spacing: .1px; }

.sheet { flex: 1; display: flex; flex-direction: column; gap: 6px; padding-right: 6px; }
.shelf { height: 32px; flex: none; background: #fafafa; border: 1px solid #d4d4d4; display: flex; }
.slabel { width: 159px; border-right: 1px solid #d4d4d4; display: flex; align-items: center; gap: 8px; padding-left: 7px; font-size: 15px; letter-spacing: -.1px; color: #444; }
.pills { display: flex; gap: 2px; padding: 3px 0 0 2px; }
.pills .pill { width: 178px; }
.pills .icao { letter-spacing: .1px; }
.below { display: flex; gap: 6px; align-items: flex-start; }
.canvas { width: 1246px; height: 770px; background: #f5ead8; border: 1px solid #b4b4b4; font-family: "Noto Sans", sans-serif; color: #000; padding-left: 8px; }
.canvas h1 { font-size: 20px; font-weight: 600; letter-spacing: -.3px; color: #333; text-align: center; height: 45px; line-height: 51px; margin-left: -8px; }

/* Crosstab */
.table { width: 896px; height: 504px; border: 4px solid #000; border-radius: 2px; font-size: 20px; letter-spacing: .15px; }
.thead { height: 57px; display: grid; grid-template-columns: 82px 200px 180px 179px 247px; grid-template-rows: 57px; align-items: stretch; letter-spacing: .25px; }
.thead div { border-right: 4px solid #000; border-bottom: 5px solid #000; padding-left: 2px; display: flex; align-items: flex-end; line-height: 26px; white-space: nowrap; }
.thead .two { display: block; line-height: 27px; margin-top: -1px; }
.thead div:first-child { border-left: 2px solid #000; letter-spacing: 0; }
.thead div:nth-child(4) { border-right-width: 5px; }
.thead .blank { border-right: 0; border-bottom-width: 3px; }
.tbody { display: flex; height: 439px; }
.idx { width: 80px; border-right: 4px solid #000; padding-left: 4px; line-height: 144px; font-weight: 600; }
.rows { width: 808px; }
.tr { height: 148px; display: grid; grid-template-columns: 200px 180px 181px 247px; border-bottom: 3px solid #000; line-height: 145px; }
.tr:last-child { border-bottom: 0; height: 144px; }
.tr:first-child { height: 147px; line-height: 144px; }
.tr span { border-right: 4px solid #000; padding-left: 4px; }
.tr span:nth-child(3) { border-right-width: 3px; }
.tr .num { border: 0; text-align: right; padding-right: 2px; font-size: 23px; letter-spacing: .1px; }

.country { width: 194px; height: 69px; border: 1px solid #d4d4d4; background: #fafafa; }
.country h4 { height: 35px; line-height: 36px; padding-left: 7px; letter-spacing: -.2px; }
.cwrap { height: 32px; background: #fff; padding: 3px 3px 0; }
.csel { height: 25px; border: 1px solid #c6c6c6; border-radius: 2px; display: flex; align-items: center; padding-left: 3px; font: 13.500px "Open Sans", sans-serif; letter-spacing: -.1px; }
.csel b { margin-left: auto; width: 22px; height: 23px; border-left: 1px solid #ddd; display: flex; align-items: center; justify-content: center; }

/* Sheet tabs and status bar */
.tabs { height: 38px; flex: none; border-top: 1px solid #c4c4c4; border-bottom: 1px solid #ccc; background: #e5e5e5; display: flex; font-size: 15px; letter-spacing: -.3px; color: #555; }
.tab { border-right: 1px solid #c6c6c6; display: flex; align-items: center; padding: 1px 0 0 7px; }
.ds { width: 163px; padding-left: 10px; gap: 6px; letter-spacing: -.1px; } .t1 { width: 251px; letter-spacing: -.35px; } .t2 { width: 250px; padding-left: 6px; } .t3 { width: 250px; } .t4 { width: 250px; padding-left: 6px; letter-spacing: -.25px; }
.tab.on { background: #fafafa; font-weight: 600; padding: 0 0 0 6px; letter-spacing: -.08px; }
.add { width: 32px; padding: 0; justify-content: center; }
.status { height: 25px; flex: none; background: #eaeaea; display: flex; align-items: center; font-size: 13px; color: #222; letter-spacing: -.2px; }
.status span { margin-top: -2px; }
.s1 { margin-left: 3px; width: 69px; letter-spacing: -.1px; } .s2 { width: 133px; letter-spacing: -.3px; } .s3 { letter-spacing: -.05px; }
.cells { margin-left: auto; align-self: stretch; display: flex; }
.cells i { border-left: 1px solid #c8c8c8; display: flex; align-items: center; padding: 0 0 2px 8px; }
.c157 { width: 157px; } .c32 { width: 32px; } .c57 { width: 57px; } .c71 { width: 71px; } .c69 { width: 70px; }

/* Taskbar */
.taskbar { height: 60px; flex: none; border-top: 1px solid #bdb5a4; display: flex; align-items: center; position: relative; font-family: "Open Sans", sans-serif; background: linear-gradient(90deg, #efe4c8 0, #f5e6cb 140px, #f4e7cd 400px, #f2e5c8 720px, #e6dfd3 800px, #e5dcd3 950px, #ead6d0 1040px, #ebd3d3 1140px, #e8d5d4 1190px, #dbdad6 1260px, #d7d7d6 1380px, #dfd5d3 1460px, #ead5d4 1560px, #ead5d4 1650px, #dbd7d5 1740px, #d8d8d8 1920px); }
.weather { width: 352px; display: flex; align-items: center; padding-left: 24px; position: relative; }
.weather svg { margin-top: -11px; }
.weather em { position: absolute; left: 45px; top: -2px; font: 14px "Open Sans", sans-serif; color: #fff; }
.weather p { margin: -1px 0 0 2px; font-size: 14.500px; line-height: 20.500px; color: #222; }
.weather p span { color: #555; letter-spacing: .15px; }
.start { width: 60px; padding-left: 13px; }
.search { width: 273px; height: 39px; border-radius: 20px; background: #fcf7ef; border: 1px solid #dccfb4; display: flex; align-items: center; padding-left: 13px; }
.search span { margin-left: 12px; font-size: 16px; color: #555; }
.bowl { margin-left: auto; margin-right: 9px; }
.apps { display: flex; margin-left: 3px; height: 60px; }
.apps > div { width: 55px; display: flex; align-items: center; justify-content: center; position: relative; }
.apps > div > svg { width: 30px; height: 30px; }
.run::after { content: ""; position: absolute; bottom: 6px; left: 24px; width: 8px; height: 4px; border-radius: 2px; background: #7f7c79; }
.apps u { position: absolute; left: 29px; top: 9px; width: 20px; height: 20px; }
.apps u svg { width: 20px; height: 20px; }
.active span { width: 48px; height: 48px; border-radius: 5px; background: #f5ebeb; display: flex; align-items: center; justify-content: center; color: #2b78ab; }
.active span svg { background: #fff; box-shadow: 0 1px 2px #aaa; }
.active::after { content: ""; position: absolute; bottom: 6px; left: 18px; width: 20px; height: 4px; border-radius: 2px; background: #0078d4; }
.tray { display: flex; align-items: center; color: #1a1a1a; font-size: 14.500px; line-height: 20.500px; }
.up { margin-left: 28px; }
.lang { margin-left: 23px; width: 34px; text-align: center; }
.wifi { margin-left: 21px; } .snd { margin-left: 11px; } .bat { margin-left: 9px; }
.clock { width: 98px; text-align: right; letter-spacing: .15px; }
.n17 { width: 22px; height: 22px; border-radius: 11px; background: #0078d4; color: #fff; font-size: 12px; text-align: center; line-height: 22px; margin-left: 7px; }
```
